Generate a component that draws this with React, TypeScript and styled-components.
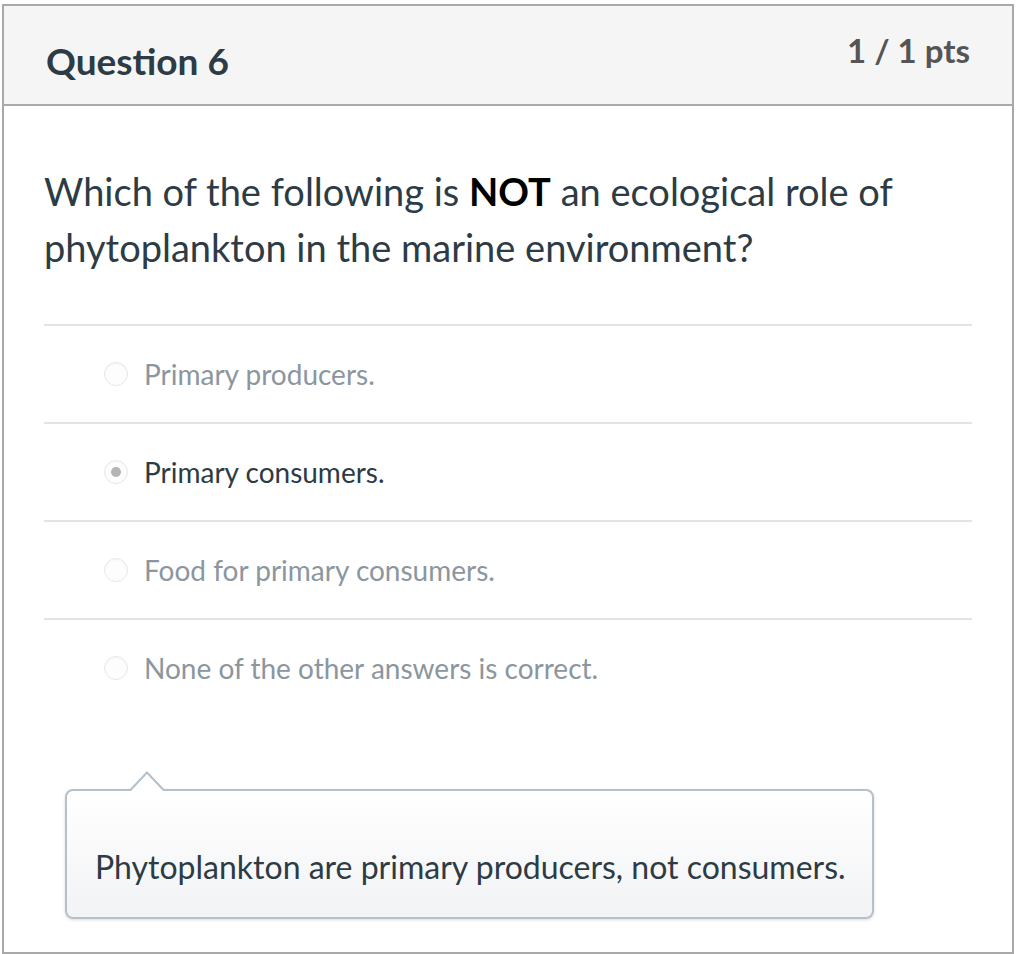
import React from "react";
import styled, { createGlobalStyle } from "styled-components";

const GlobalStyle = createGlobalStyle`
  body {
    margin: 0;
    background: #ffffff;
    font-family: Lato, "Open Sans", sans-serif;
    color: #2d3b45;
  }
`;

interface Answer {
  text: string;
  selected?: boolean;
}

const answers: Answer[] = [
  { text: "Primary producers." },
  { text: "Primary consumers.", selected: true },
  { text: "Food for primary consumers." },
  { text: "None of the other answers is correct." },
];

const App: React.FC = () => {
  return (
    <>
      <GlobalStyle />
      <Card>
        <Header>
          <Title>Question 6</Title>
          <Points>1 / 1 pts</Points>
        </Header>
        <Body>
          <QuestionText>
            Which of the following is <strong>NOT</strong> an ecological role of
            phytoplankton in the marine environment?
          </QuestionText>
          <AnswerList>
            {answers.map((a) => (
              <AnswerRow key={a.text}>
                <Radio selected={a.selected} />
                <AnswerText selected={a.selected}>{a.text}</AnswerText>
              </AnswerRow>
            ))}
          </AnswerList>
          <Comment>
            <p>Phytoplankton are primary producers, not consumers.</p>
          </Comment>
        </Body>
      </Card>
    </>
  );
};

export default App;

const Card = styled.div`
  margin: 4px 0 0 2px;
  width: 1012px;
  box-sizing: border-box;
  border: 2px solid #a9a9a9;
  background: #ffffff;
`;

const Header = styled.div`
  display: flex;
  justify-content: space-between;
  align-items: flex-start;
  height: 98px;
  padding: 0 42px;
  background: #f5f5f5;
  border-bottom: 2px solid #a9a9a9;
`;

const Title = styled.h2`
  margin: 0;
  padding-top: 35px;
  font-size: 37px;
  font-weight: 700;
  line-height: 40px;
  color: #2d3b45;
`;

const Points = styled.div`
  padding-top: 26px;
  font-size: 33px;
  font-weight: 700;
  line-height: 36px;
  color: #555555;
`;

const Body = styled.div`
  padding: 57px 40px 33px 40px;
`;

const QuestionText = styled.div`
  font-size: 38px;
  line-height: 56px;
  color: #2d3b45;
  padding-bottom: 49px;

  strong {
    color: #000000;
  }
`;

const AnswerList = styled.div`
  display: flex;
  flex-direction: column;
`;

const AnswerRow = styled.div`
  display: flex;
  align-items: center;
  height: 96px;
  border-top: 2px solid #e3e3e3;
  padding-left: 60px;
  gap: 17px;
`;

const Radio = styled.span<{ selected?: boolean }>`
  position: relative;
  width: 22px;
  height: 22px;
  border-radius: 50%;
  border: 1px solid #e8e8e8;
  background: #fdfdfd;
  box-shadow: inset 0 1px 2px rgba(0, 0, 0, 0.04);
  flex-shrink: 0;

  &::after {
    content: "";
    display: ${(p) => (p.selected ? "block" : "none")};
    position: absolute;
    left: 50%;
    top: 50%;
    width: 10px;
    height: 10px;
    margin: -5px 0 0 -5px;
    border-radius: 50%;
    background: #b4b4b4;
  }
`;

const AnswerText = styled.span<{ selected?: boolean }>`
  font-size: 28px;
  margin-left: -1px;
  color: ${(p) => (p.selected ? "#2d3b45" : "#8b969e")};
`;

const Comment = styled.div`
  position: relative;
  margin: 73px 0 0 21px;
  width: 809px;
  height: 130px;
  box-sizing: border-box;
  border: 2px solid #b5c0c8;
  border-radius: 8px;
  background: linear-gradient(#ffffff, #f2f3f5);
  box-shadow: 0 1px 3px rgba(0, 0, 0, 0.15);
  display: flex;
  align-items: center;
  padding: 24px 0 0 28px;

  &::before,
  &::after {
    content: "";
    position: absolute;
    width: 0;
    height: 0;
    border-style: solid;
  }

  &::before {
    top: -20px;
    left: 61px;
    border-width: 0 19px 20px 19px;
    border-color: transparent transparent #b5c0c8 transparent;
  }

  &::after {
    top: -17px;
    left: 63px;
    border-width: 0 17px 18px 17px;
    border-color: transparent transparent #ffffff transparent;
  }

  p {
    margin: 0;
    font-size: 32px;
    white-space: nowrap;
    color: #2d3b45;
  }
`;
